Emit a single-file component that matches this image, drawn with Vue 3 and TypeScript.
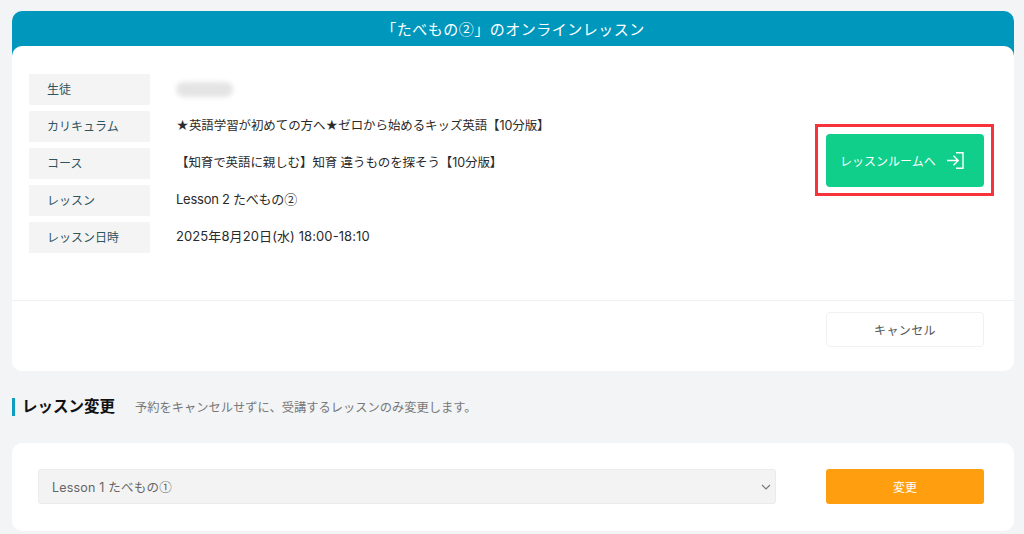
<script setup lang="ts">
interface Row { label: string; value: string; blurred?: boolean; kind?: string }
const rows: Row[] = [
  { label: '生徒', value: '', blurred: true },
  { label: 'カリキュラム', value: '★英語学習が初めての方へ★ゼロから始めるキッズ英語【10分版】' },
  { label: 'コース', value: '【知育で英語に親しむ】知育 違うものを探そう【10分版】' },
  { label: 'レッスン', value: 'Lesson 2 たべもの', kind: 'lesson-name' },
  { label: 'レッスン日時', value: '2025年8月20日(水) 18:00-18:10', kind: 'date' },
]
</script>

<template>
  <div class="page">
    <section class="card lesson">
      <h1 class="title">「たべもの<span class="cjk">②</span>」のオンラインレッスン</h1>
      <div class="body">
        <div class="info">
          <dl class="rows">
            <div v-for="r in rows" :key="r.label" class="row">
              <dt class="label">{{ r.label }}</dt>
              <dd class="value" :class="r.kind">
                <span v-if="r.blurred" class="blur"></span>{{ r.value }}<span v-if="r.kind === 'lesson-name'" class="cjk">②</span>
              </dd>
            </div>
          </dl>
          <div class="highlight">
            <button class="enter" type="button">
              <span>レッスンルームへ</span>
              <svg width="19" height="19" viewBox="0 0 19 19" fill="none" stroke="#fff" stroke-width="1.4">
                <path d="M11 1.7h7v15.6h-7" />
                <path d="M2 9.5h11M8.5 4.8l4.7 4.7-4.7 4.7" />
              </svg>
            </button>
          </div>
        </div>
        <div class="foot">
          <button class="cancel" type="button">キャンセル</button>
        </div>
      </div>
    </section>

    <div class="heading">
      <h2 class="h2">レッスン変更</h2>
      <p class="note">予約をキャンセルせずに、受講するレッスンのみ変更します。</p>
    </div>

    <section class="card change">
      <div class="select">
        <span class="selected">Lesson 1 たべもの<span class="cjk">①</span></span>
        <svg width="10" height="6" viewBox="0 0 10 6" fill="none" stroke="#777" stroke-width="1.1">
          <path d="M1 1l4 4 4-4" />
        </svg>
      </div>
      <button class="submit" type="button">変更</button>
    </section>
  </div>
</template>

<style>
html, body { margin: 0; background: #f2f4f6; }
</style>

<style scoped>
.page {
  box-sizing: border-box;
  width: 1024px;
  height: 534px;
  overflow: hidden;
  padding: 11px 10px 0 12px;
  font-family: Inter, "Noto Sans CJK JP", sans-serif;
  color: #333;
  background: #f2f4f6;
}
.cjk { font-family: "Noto Sans CJK JP", sans-serif; }
.card { background: #fff; border-radius: 10px; }
.lesson {
  background: #fff;
  height: 360px;
  display: flex;
  flex-direction: column;
  overflow: hidden;
}
.title {
  margin: 0;
  height: 45px;
  margin-bottom: -10px;
  padding-bottom: 10px;
  box-sizing: border-box;
  line-height: 35px;
  text-align: center;
  font-size: 15px;
  font-weight: 400;
  letter-spacing: 0.5px;
  color: #fff;
  background: #0097bd;
}
.body {
  position: relative;
  flex: 1;
  background: #fff;
  border-radius: 10px;
  display: flex;
  flex-direction: column;
}
.info {
  height: 255px;
  box-sizing: border-box;
  padding: 28px 20px 0 17px;
  display: flex;
  justify-content: space-between;
  align-items: flex-start;
  border-bottom: 1px solid #eff1f3;
}
.rows { margin: 0; display: flex; flex-direction: column; gap: 6px; }
.row { display: flex; align-items: center; height: 31px; }
.label {
  box-sizing: border-box;
  width: 121px;
  height: 31px;
  line-height: 31px;
  padding-left: 18px;
  background: #f4f4f5;
  font-size: 12px;
  color: #2f5560;
}
.value {
  margin: 0 0 4px 26px;
  font-size: 12.5px;
  color: #2a2a2a;
  letter-spacing: -0.1px;
}
.value.date { font-size: 13px; letter-spacing: 0.1px; }
.value.lesson-name { font-size: 13px; letter-spacing: -0.25px; }
.blur {
  display: block;
  width: 54px;
  height: 15px;
  margin: 4px 0 0 0;
  border-radius: 8px;
  background: #e4e4e4;
  filter: blur(2.5px);
  transform: scaleX(1.06);
  transform-origin: left;
}
.highlight {
  margin-top: 50px;
  padding: 7px 7px 6px 8px;
  border: 3px solid #f7323a;
}
.enter {
  box-sizing: border-box;
  width: 158px;
  height: 53px;
  display: flex;
  align-items: center;
  justify-content: space-between;
  padding: 0 20px 0 14px;
  background: #10cf8a;
  border: 0;
  border-radius: 4px;
  color: #fff;
  font: inherit;
  font-size: 12px;
}
.foot {
  flex: 1;
  display: flex;
  justify-content: flex-end;
  align-items: flex-start;
  padding: 11px 30px 0 0;
}
.cancel {
  box-sizing: border-box;
  width: 158px;
  height: 35px;
  background: #fff;
  border: 1px solid #eff1f3;
  border-radius: 4px;
  font: inherit;
  font-size: 12px;
  color: #555;
  letter-spacing: 0.4px;
}
.heading {
  display: flex;
  align-items: center;
  gap: 20px;
  height: 72px;
}
.h2 {
  margin: 0;
  padding-left: 7px;
  border-left: 3px solid #0f9dbf;
  height: 18px;
  line-height: 17px;
  font-size: 15.5px;
  font-weight: 700;
  color: #111;
}
.note { margin: 0; font-size: 12.25px; color: #777; }
.change {
  height: 88px;
  box-sizing: border-box;
  padding: 26px 30px 0 26px;
  display: flex;
  justify-content: space-between;
  align-items: flex-start;
}
.select {
  box-sizing: border-box;
  width: 738px;
  height: 35px;
  display: flex;
  align-items: center;
  justify-content: space-between;
  padding: 0 4px 0 13px;
  background: #f3f3f3;
  border: 1px solid #e9ebec;
  border-radius: 3px;
  font-size: 12.5px;
  color: #666;
}
.selected { letter-spacing: 0.2px; }
.submit {
  width: 158px;
  height: 35px;
  background: #ff9f10;
  border: 0;
  border-radius: 3px;
  color: #fff;
  font: inherit;
  font-size: 12px;
}
</style>
